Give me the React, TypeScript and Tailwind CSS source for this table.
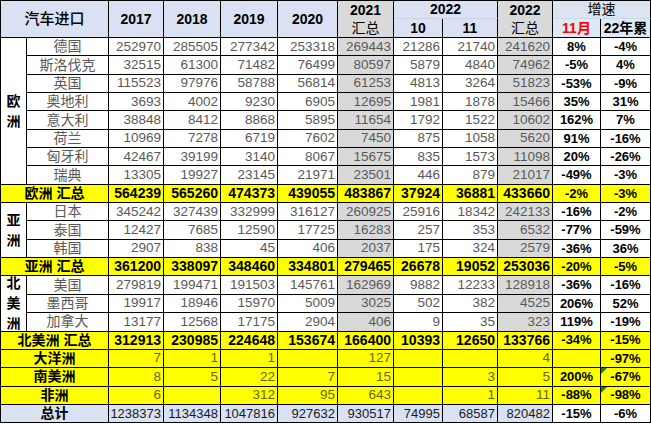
type Row = { name: string; v: (number | string)[]; p: [string, string]; tri?: boolean };

const europe: Row[] = [
  { name: "德国", v: [252970, 285505, 277342, 253318, 269443, 21286, 21740, 241620], p: ["8%", "-4%"] },
  { name: "斯洛伐克", v: [32515, 61300, 71482, 76499, 80597, 5879, 4840, 74962], p: ["-5%", "4%"] },
  { name: "英国", v: [115523, 97976, 58788, 56814, 61253, 4813, 3264, 51823], p: ["-53%", "-9%"] },
  { name: "奥地利", v: [3693, 4002, 9230, 6905, 12695, 1981, 1878, 15466], p: ["35%", "31%"] },
  { name: "意大利", v: [38848, 8412, 8868, 5895, 11654, 1792, 1522, 10602], p: ["162%", "7%"] },
  { name: "荷兰", v: [10969, 7278, 6719, 7602, 7450, 875, 1058, 5620], p: ["91%", "-16%"] },
  { name: "匈牙利", v: [42467, 39199, 3140, 8067, 15675, 835, 1573, 11098], p: ["20%", "-26%"] },
  { name: "瑞典", v: [13305, 19927, 23145, 21971, 23501, 446, 879, 21017], p: ["-49%", "-3%"] },
];
const europeSum: Row = { name: "欧洲 汇总", v: [564239, 565260, 474373, 439055, 483867, 37924, 36881, 433660], p: ["-2%", "-3%"] };

const asia: Row[] = [
  { name: "日本", v: [345242, 327439, 332999, 316127, 260925, 25916, 18342, 242133], p: ["-16%", "-2%"] },
  { name: "泰国", v: [12427, 7685, 12590, 17725, 16283, 257, 353, 6532], p: ["-77%", "-59%"] },
  { name: "韩国", v: [2907, 838, 45, 406, 2037, 175, 324, 2579], p: ["-36%", "36%"] },
];
const asiaSum: Row = { name: "亚洲 汇总", v: [361200, 338097, 348460, 334801, 279465, 26678, 19052, 253036], p: ["-20%", "-5%"] };

const namerica: Row[] = [
  { name: "美国", v: [279819, 199471, 191503, 145761, 162969, 9882, 12233, 128918], p: ["-36%", "-16%"] },
  { name: "墨西哥", v: [19917, 18946, 15970, 5009, 3025, 502, 382, 4525], p: ["206%", "52%"] },
  { name: "加拿大", v: [13177, 12568, 17175, 2904, 406, 9, 35, 323], p: ["119%", "-19%"] },
];
const namericaSum: Row = { name: "北美洲 汇总", v: [312913, 230985, 224648, 153674, 166400, 10393, 12650, 133766], p: ["-34%", "-15%"] };

const others: Row[] = [
  { name: "大洋洲", v: [7, 1, 1, "", 127, "", "", 4], p: ["", "-97%"] },
  { name: "南美洲", v: [8, 5, 22, 7, 15, "", 3, 5], p: ["200%", "-67%"], tri: true },
  { name: "非洲", v: [6, "", 312, 95, 643, "", 1, 11], p: ["-88%", "-98%"], tri: true },
];
const total: Row = { name: "总计", v: [1238373, 1134348, 1047816, 927632, 930517, 74995, 68587, 820482], p: ["-15%", "-6%"] };

const cell = "border-r border-b border-black flex items-center whitespace-nowrap overflow-hidden";

function DataRow({ r }: { r: Row }) {
  return (
    <>
      <div className={`${cell} justify-center text-[14px] text-[#595959]`}>{r.name}</div>
      {r.v.map((n, i) => (
        <div
          key={i}
          className={`${cell} justify-end pr-[2px] text-[13.5px] text-[#595959] ${i === 4 || i === 7 ? "bg-[#d9d9d9]" : "bg-white"}`}
        >
          {n}
        </div>
      ))}
      {r.p.map((s, i) => (
        <div key={"p" + i} className={`${cell} justify-center text-[13px] font-bold text-black`}>
          {s}
        </div>
      ))}
    </>
  );
}

function SumRow({ r }: { r: Row }) {
  return (
    <>
      <div className={`${cell} col-span-2 justify-center bg-[#ffff00] text-[14px] font-bold text-black`}>{r.name}</div>
      {r.v.map((n, i) => (
        <div key={i} className={`${cell} justify-end pr-[2px] bg-[#ffff00] text-[14px] font-bold text-black`}>
          {n}
        </div>
      ))}
      {r.p.map((s, i) => (
        <div key={"p" + i} className={`${cell} justify-center bg-[#ffff00] text-[13px] font-bold text-black`}>
          {s}
        </div>
      ))}
    </>
  );
}

function OtherRow({ r }: { r: Row }) {
  return (
    <>
      <div className={`${cell} col-span-2 justify-center bg-[#ffff00] text-[14px] font-bold text-black`}>{r.name}</div>
      {r.v.map((n, i) => (
        <div key={i} className={`${cell} justify-end pr-[2px] bg-[#ffff00] text-[13.5px] text-[#66661a]`}>
          {n}
        </div>
      ))}
      {r.p.map((s, i) => (
        <div key={"p" + i} className={`${cell} relative justify-center bg-[#ffff00] text-[13px] font-bold text-black`}>
          {i === 1 && r.tri && (
            <span className="absolute left-0 top-0 h-0 w-0 border-t-[6px] border-r-[6px] border-t-[#1f7a2f] border-r-transparent" />
          )}
          {s}
        </div>
      ))}
    </>
  );
}

function Region({ chars, span }: { chars: string[]; span: string }) {
  return (
    <div className={`border-r border-b border-black flex flex-col items-center justify-center ${span} text-[14px] font-bold leading-[20px] text-black`}>
      {chars.map((c) => (
        <span key={c}>{c}</span>
      ))}
    </div>
  );
}

export default function App() {
  const head = "bg-[#d9e1f2]";
  return (
    <div className="bg-white w-[651px] h-[424px] font-['Liberation_Sans','Noto_Sans_CJK_SC',sans-serif]">
      <div className="grid grid-cols-[26px_82px_55px_57px_57px_60px_56px_49px_55px_55px_48px_50px] grid-rows-[18px_19px_repeat(21,18.35px)] border-l border-t border-black w-[651px]">
        {/* header */}
        <div className={`${cell} ${head} col-span-2 row-span-2 justify-center text-[15px] font-medium text-black`}>汽车进口</div>
        {["2017", "2018", "2019", "2020"].map((y) => (
          <div key={y} className={`${cell} ${head} row-span-2 justify-center text-[14px] font-bold text-black`}>
            {y}
          </div>
        ))}
        <div className={`${cell} row-span-2 flex-col justify-center bg-[#d9d9d9] text-[14px] leading-[18px] text-black`}>
          <span className="font-bold">2021</span>
          <span>汇总</span>
        </div>
        <div className={`border-r border-b border-b-[#c9d3e6] border-r-black col-span-2 flex items-center justify-center ${head} text-[14px] font-bold text-black`}>
          2022
        </div>
        <div className={`${cell} row-span-2 flex-col justify-center bg-[#d9d9d9] text-[14px] leading-[18px] text-black`}>
          <span className="font-bold">2022</span>
          <span>汇总</span>
        </div>
        <div className="border-r border-b border-b-[#c9d9ea] border-r-black col-span-2 flex items-center justify-center bg-[#dbe5f1] text-[14px] text-black">
          增速
        </div>
        <div className={`${cell} ${head} justify-center text-[14px] font-bold text-black`}>10</div>
        <div className={`${cell} ${head} justify-center text-[14px] font-bold text-black`}>11</div>
        <div className={`${cell} bg-[#dde9f5] justify-center text-[14px] font-bold text-[#ff0000]`}>11月</div>
        <div className={`${cell} bg-[#dde9f5] justify-center text-[14px] font-bold text-black`}>22年累</div>

        {/* europe */}
        <Region chars={["欧", "洲"]} span="row-span-8" />
        {europe.map((r) => (
          <DataRow key={r.name} r={r} />
        ))}
        <SumRow r={europeSum} />

        {/* asia */}
        <Region chars={["亚", "洲"]} span="row-span-3" />
        {asia.map((r) => (
          <DataRow key={r.name} r={r} />
        ))}
        <SumRow r={asiaSum} />

        {/* north america */}
        <Region chars={["北", "美", "洲"]} span="row-span-3" />
        {namerica.map((r) => (
          <DataRow key={r.name} r={r} />
        ))}
        <SumRow r={namericaSum} />

        {others.map((r) => (
          <OtherRow key={r.name} r={r} />
        ))}

        {/* total */}
        <div className={`${cell} ${head} col-span-2 justify-center text-[14px] font-bold text-black`}>{total.name}</div>
        {total.v.map((n, i) => (
          <div key={i} className={`${cell} ${head} justify-end pr-[2px] text-[13px] text-[#1a1a1a]`}>
            {n}
          </div>
        ))}
        {total.p.map((s, i) => (
          <div key={"p" + i} className={`${cell} justify-center bg-white text-[13px] font-bold text-black`}>
            {s}
          </div>
        ))}
      </div>
    </div>
  );
}
